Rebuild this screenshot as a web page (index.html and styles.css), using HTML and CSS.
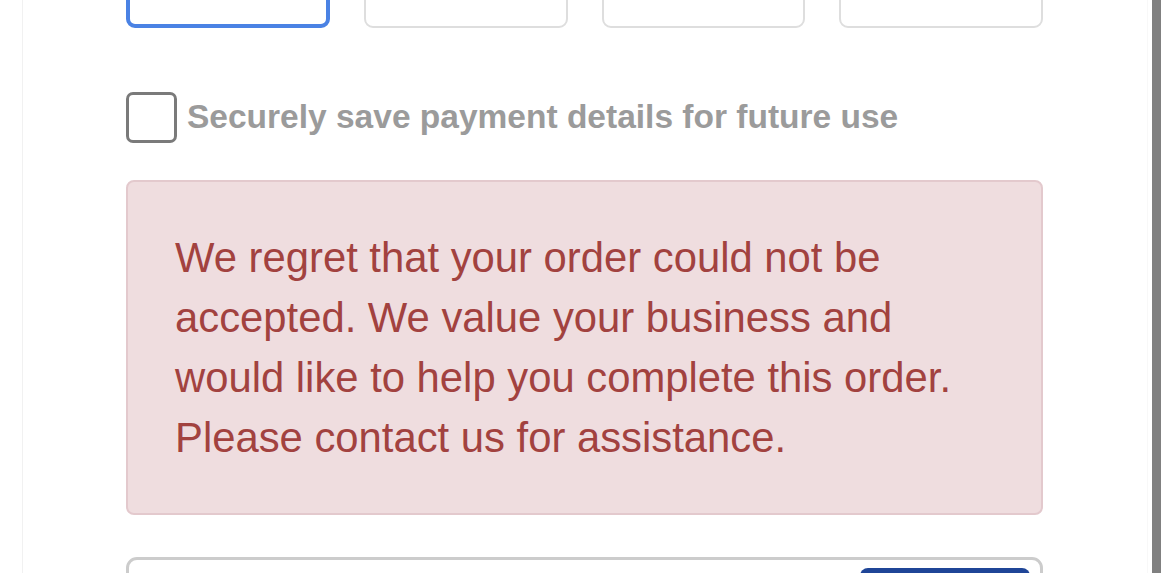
FILE: index.html
```html
<!DOCTYPE html>
<html lang="en">
<head>
<meta charset="utf-8">
<title>Payment</title>
<link rel="stylesheet" href="styles.css">
</head>
<body>
<div class="page">
  <main class="panel">
    <div class="content">
      <div class="cards">
        <div class="card card-active"></div>
        <div class="card"></div>
        <div class="card"></div>
        <div class="card"></div>
      </div>
      <label class="save">
        <span class="checkbox"></span>
        <span class="save-text">Securely save payment details for future use</span>
      </label>
      <div class="alert">
        We regret that your order could not be accepted. We value your business and would like to help you complete this order. Please contact us for assistance.
      </div>
      <div class="footer-box">
        <span class="btn"></span>
      </div>
    </div>
  </main>
  <div class="scrollbar"></div>
</div>
</body>
</html>
```

FILE: styles.css
```css
html, body {
  margin: 0;
  padding: 0;
  background: #ffffff;
  overflow: hidden;
  height: 573px;
}

body {
  font-family: "Liberation Sans", Arial, Helvetica, sans-serif;
}

.page {
  display: flex;
  height: 573px;
}

.panel {
  flex: 1;
  margin-left: 22px;
  margin-right: 4px;
  border-left: 1px solid #f1f1f1;
  border-right: 1px solid #f8f8f8;
  height: 573px;
  overflow: hidden;
}

.content {
  width: 917px;
  margin-left: 103px;
}

.cards {
  display: grid;
  grid-template-columns: repeat(4, 1fr);
  column-gap: 34px;
  margin-top: -32px;
}

.card {
  height: 60px;
  box-sizing: border-box;
  border: 2px solid #dedede;
  border-radius: 9px;
  background: #ffffff;
}

.card-active {
  border: 4px solid #4a82e4;
}

.save {
  display: flex;
  align-items: center;
  margin-top: 64px;
  height: 51px;
}

.checkbox {
  width: 51px;
  height: 51px;
  box-sizing: border-box;
  border: 3px solid #7a7a7a;
  border-radius: 7px;
  flex: none;
}

.save-text {
  margin-left: 10px;
  font-size: 33.5px;
  font-weight: bold;
  color: #9b9b9b;
  line-height: 1;
  position: relative;
  top: -1px;
}

.alert {
  margin-top: 37px;
  box-sizing: border-box;
  border: 2px solid #e3c9cd;
  border-radius: 8px;
  background: #efdddf;
  color: #a2423f;
  font-size: 41.8px;
  line-height: 60px;
  padding: 46px 40px 45px 47px;
}

.footer-box {
  margin-top: 42px;
  height: 80px;
  box-sizing: border-box;
  border: 3px solid #cccccc;
  border-radius: 11px;
  display: flex;
  justify-content: flex-end;
  align-items: flex-start;
  padding: 8px 10px 0 0;
}

.btn {
  width: 170px;
  height: 50px;
  border-radius: 8px;
  background: #1f4597;
}

.scrollbar {
  width: 9px;
  height: 573px;
  background: #808080;
  margin-right: 9px;
  flex: none;
}
```
